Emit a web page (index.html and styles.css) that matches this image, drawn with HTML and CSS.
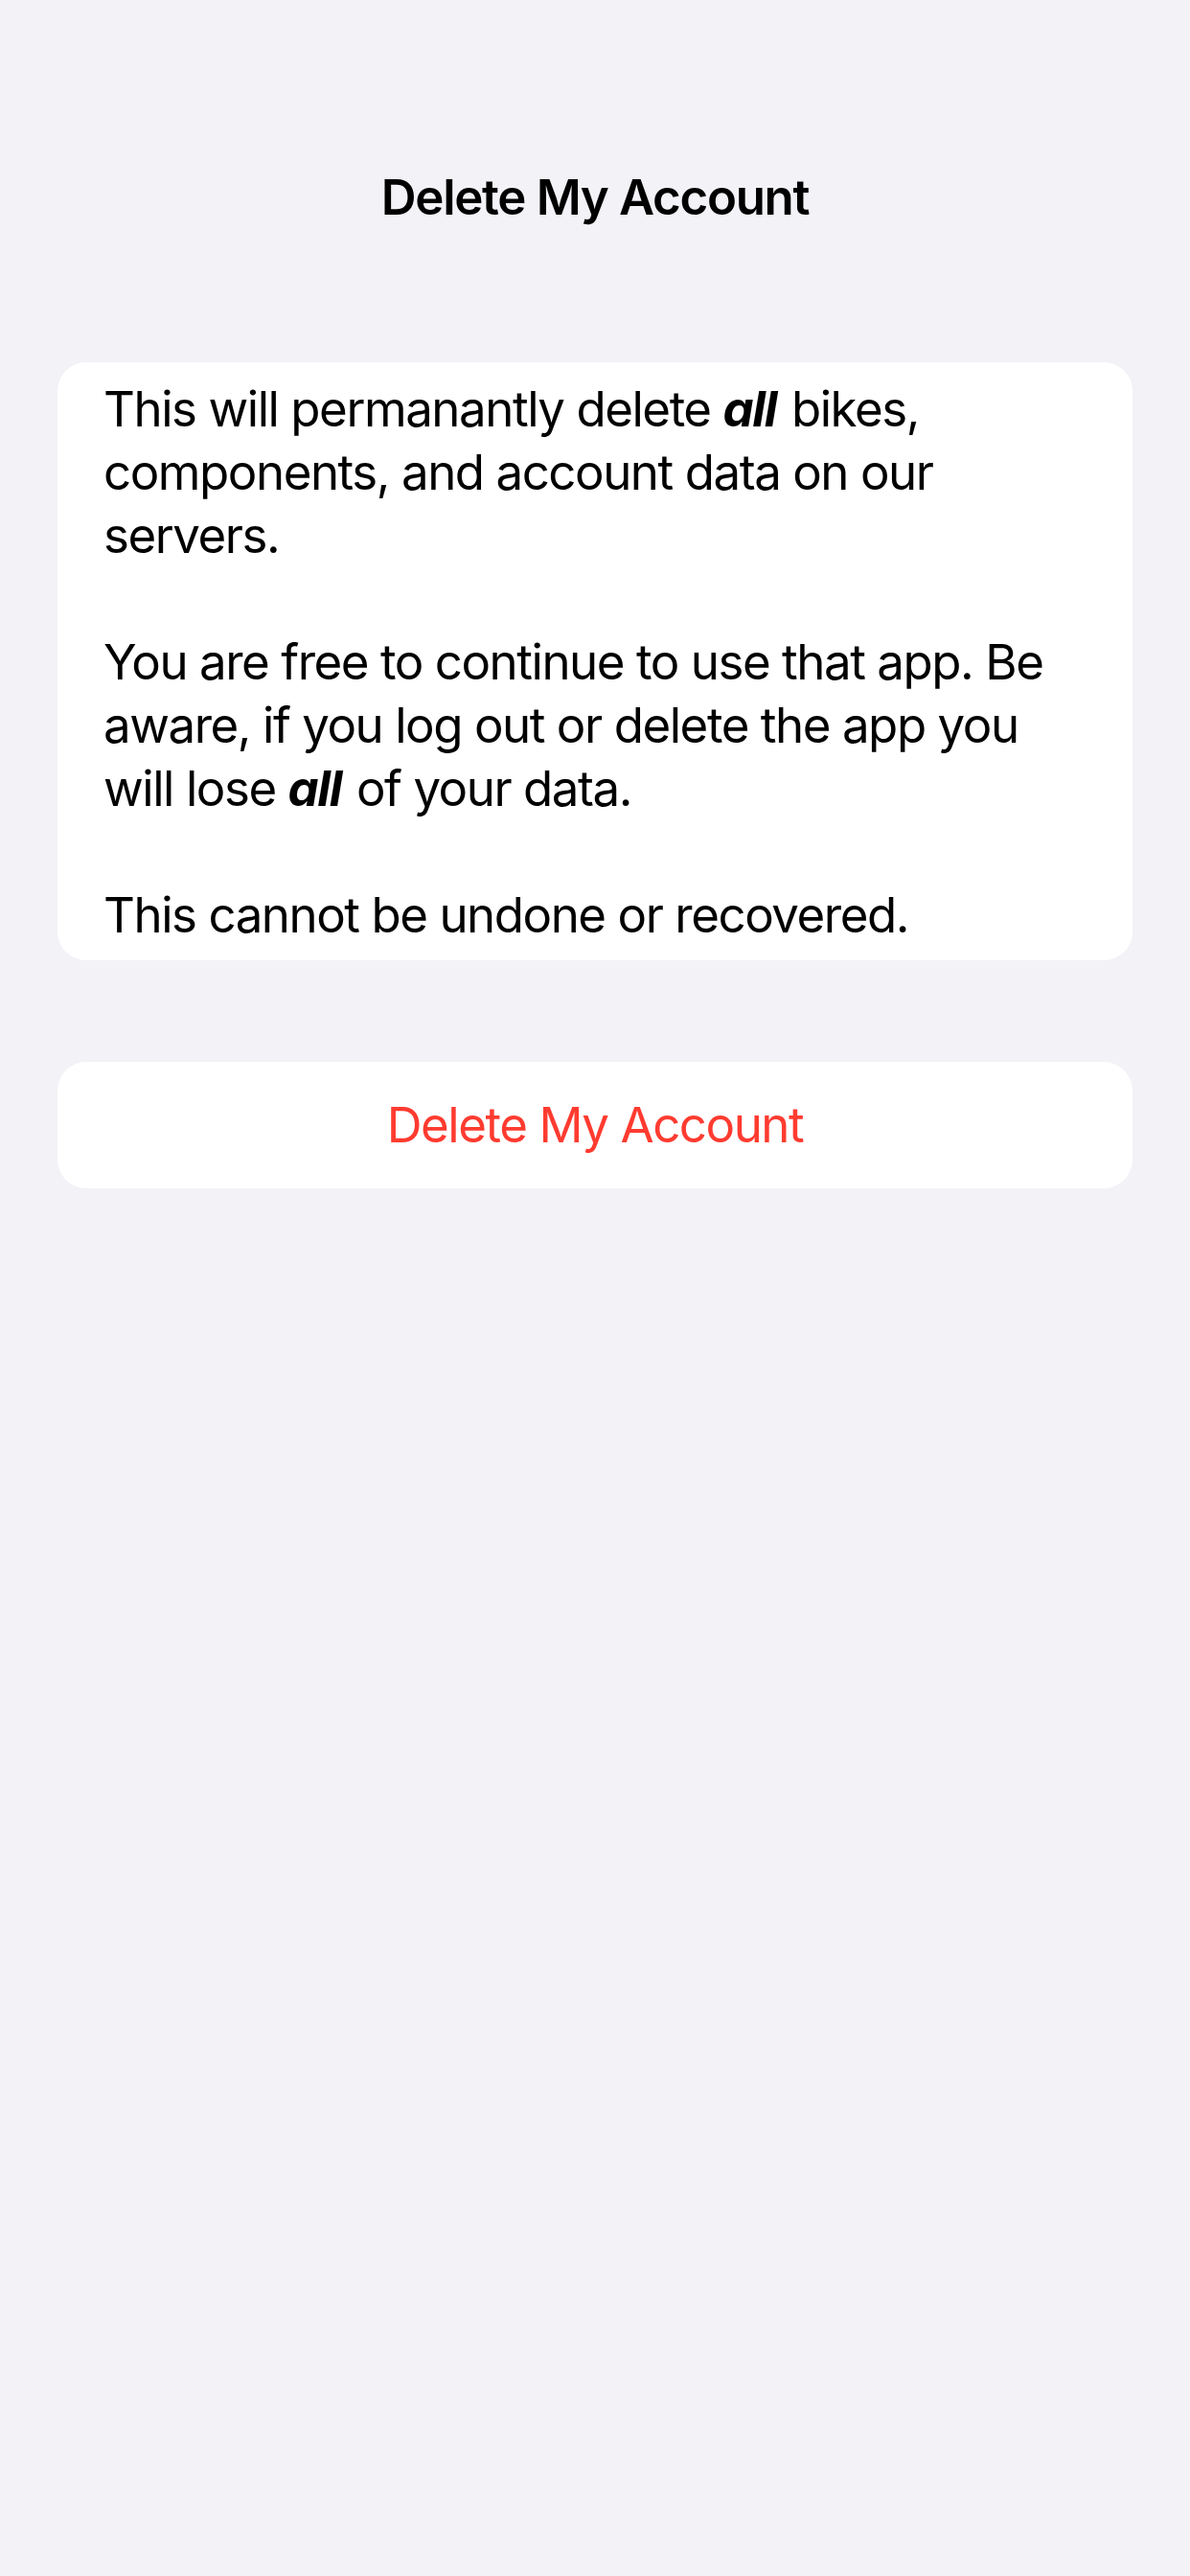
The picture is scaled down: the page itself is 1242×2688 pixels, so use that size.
FILE: index.html
```html
<!DOCTYPE html>
<html lang="en">
<head>
<meta charset="utf-8">
<title>Delete My Account</title>
<link rel="stylesheet" href="styles.css">
</head>
<body>
<main class="screen">
  <h1 class="nav-title">Delete My Account</h1>
  <section class="card info">
    <p>This will permanantly delete <em>all</em> bikes, components, and account data on our servers.</p>
    <p>You are free to continue to use that app. Be aware, if you log out or delete the app you will lose <em>all</em> of your data.</p>
    <p>This cannot be undone or recovered.</p>
  </section>
  <button class="card action" type="button">Delete My Account</button>
</main>
</body>
</html>
```
FILE: styles.css
```css
html, body {
  margin: 0;
  padding: 0;
  background: #F2F2F7;
}
body {
  width: 1242px;
  min-height: 2688px;
  font-family: Inter, "Noto Sans", "Liberation Sans", sans-serif;
  color: #000;
  font-size: 51px;
  line-height: 66px;
  letter-spacing: -1.45px;
}
.screen {
  display: flex;
  flex-direction: column;
  padding: 173px 60px 0;
}
.nav-title {
  margin: 0;
  font-size: 51px;
  line-height: 66px;
  font-weight: 600;
  text-align: center;
  letter-spacing: -1.3px;
}
.card {
  background: #fff;
  border-radius: 30px;
}
.info {
  margin-top: 139px;
  padding: 16px 60px 14px 48px;
  display: flex;
  flex-direction: column;
  gap: 66px;
}
.info p {
  margin: 0;
}
.info em {
  font-style: italic;
  font-weight: 700;
  padding-right: 3px;
}
.action {
  margin-top: 106px;
  height: 132px;
  border: none;
  font: inherit;
  letter-spacing: -1.45px;
  color: #FF3B30;
  text-align: center;
  padding: 0;
}
```
